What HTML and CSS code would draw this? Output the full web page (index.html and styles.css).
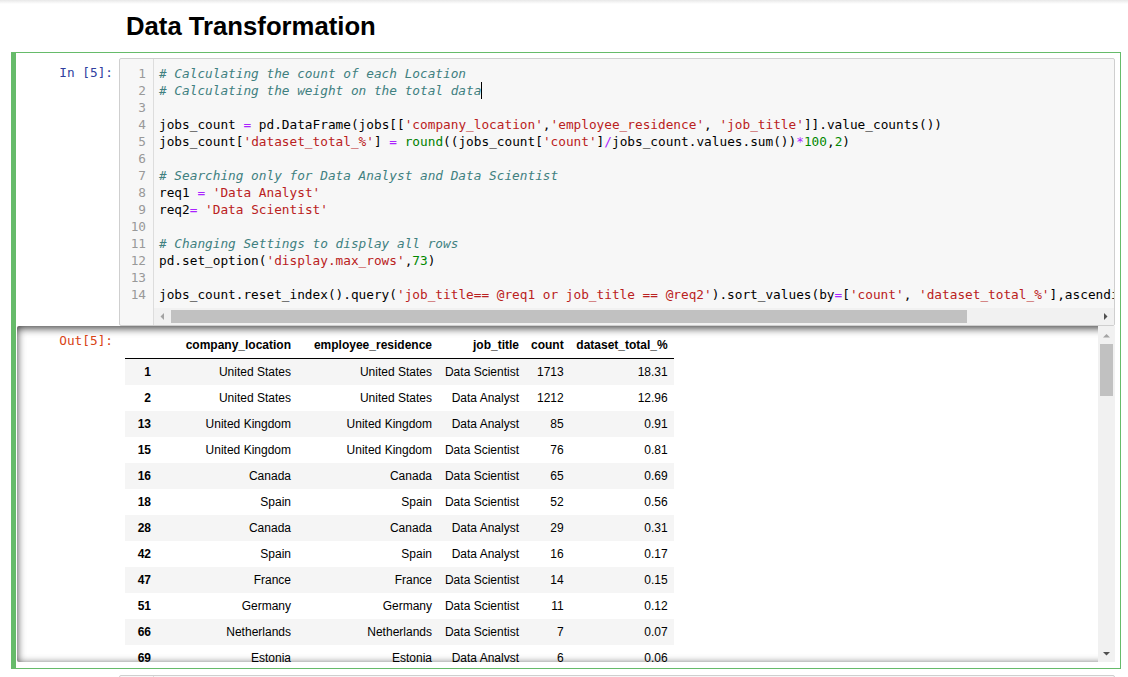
FILE: index.html
```html
<!DOCTYPE html>
<html>
<head>
<meta charset="utf-8">
<link rel="stylesheet" href="styles.css">
</head>
<body>
<div class="notebook">
  <div class="cell text-cell">
    <div class="prompt"></div>
    <div class="text-render"><h2>Data Transformation</h2></div>
  </div>

  <div class="cell selected">
    <div class="input">
      <div class="prompt in-prompt">In&nbsp;[5]:</div>
      <div class="input-area">
        <div class="gutter">
          <div class="line">1</div><div class="line">2</div><div class="line">3</div><div class="line">4</div><div class="line">5</div><div class="line">6</div><div class="line">7</div><div class="line">8</div><div class="line">9</div><div class="line">10</div><div class="line">11</div><div class="line">12</div><div class="line">13</div><div class="line">14</div>
        </div>
        <div class="main">
          <div class="code">
            <div class="line"><span class="cm"># Calculating the count of each Location</span></div>
            <div class="line"><span class="cm"># Calculating the weight on the total data</span><span class="cursor"></span></div>
            <div class="line"> </div>
            <div class="line">jobs_count <span class="op">=</span> pd.DataFrame(jobs[[<span class="st">'company_location'</span>,<span class="st">'employee_residence'</span>, <span class="st">'job_title'</span>]].value_counts())</div>
            <div class="line">jobs_count[<span class="st">'dataset_total_%'</span>] <span class="op">=</span> <span class="bi">round</span>((jobs_count[<span class="st">'count'</span>]<span class="op">/</span>jobs_count.values.sum())<span class="op">*</span><span class="nu">100</span>,<span class="nu">2</span>)</div>
            <div class="line"> </div>
            <div class="line"><span class="cm"># Searching only for Data Analyst and Data Scientist</span></div>
            <div class="line">req1 <span class="op">=</span> <span class="st">'Data Analyst'</span></div>
            <div class="line">req2<span class="op">=</span> <span class="st">'Data Scientist'</span></div>
            <div class="line"> </div>
            <div class="line"><span class="cm"># Changing Settings to display all rows</span></div>
            <div class="line">pd.set_option(<span class="st">'display.max_rows'</span>,<span class="nu">73</span>)</div>
            <div class="line"> </div>
            <div class="line">jobs_count.reset_index().query(<span class="st">'job_title== @req1 or job_title == @req2'</span>).sort_values(by<span class="op">=</span>[<span class="st">'count'</span>, <span class="st">'dataset_total_%'</span>],ascending<span class="op">=</span><span class="kw">False</span>)</div>
          </div>
          <div class="hscroll">
            <div class="sbtn"><svg width="17" height="17" viewBox="0 0 17 17"><polygon points="10,5 10,12 6.5,8.5" fill="#a3a3a3"/></svg></div>
            <div class="hthumb"></div>
            <div class="track"></div>
            <div class="sbtn"><svg width="17" height="17" viewBox="0 0 17 17"><polygon points="7,5 7,12 10.5,8.5" fill="#505050"/></svg></div>
          </div>
        </div>
      </div>
    </div>

    <div class="output-scroll">
      <div class="output-area">
        <div class="prompt out-prompt">Out[5]:</div>
        <div class="output-sub">
          <table class="df">
            <thead>
              <tr><th class="c0"></th><th class="c1">company_location</th><th class="c2">employee_residence</th><th class="c3">job_title</th><th class="c4">count</th><th class="c5">dataset_total_%</th></tr>
            </thead>
            <tbody>
              <tr><th>1</th><td>United States</td><td>United States</td><td>Data Scientist</td><td>1713</td><td>18.31</td></tr>
              <tr><th>2</th><td>United States</td><td>United States</td><td>Data Analyst</td><td>1212</td><td>12.96</td></tr>
              <tr><th>13</th><td>United Kingdom</td><td>United Kingdom</td><td>Data Analyst</td><td>85</td><td>0.91</td></tr>
              <tr><th>15</th><td>United Kingdom</td><td>United Kingdom</td><td>Data Scientist</td><td>76</td><td>0.81</td></tr>
              <tr><th>16</th><td>Canada</td><td>Canada</td><td>Data Scientist</td><td>65</td><td>0.69</td></tr>
              <tr><th>18</th><td>Spain</td><td>Spain</td><td>Data Scientist</td><td>52</td><td>0.56</td></tr>
              <tr><th>28</th><td>Canada</td><td>Canada</td><td>Data Analyst</td><td>29</td><td>0.31</td></tr>
              <tr><th>42</th><td>Spain</td><td>Spain</td><td>Data Analyst</td><td>16</td><td>0.17</td></tr>
              <tr><th>47</th><td>France</td><td>France</td><td>Data Scientist</td><td>14</td><td>0.15</td></tr>
              <tr><th>51</th><td>Germany</td><td>Germany</td><td>Data Scientist</td><td>11</td><td>0.12</td></tr>
              <tr><th>66</th><td>Netherlands</td><td>Netherlands</td><td>Data Scientist</td><td>7</td><td>0.07</td></tr>
              <tr><th>69</th><td>Estonia</td><td>Estonia</td><td>Data Analyst</td><td>6</td><td>0.06</td></tr>
            </tbody>
          </table>
        </div>
      </div>
      <div class="vscroll">
        <div class="sbtn"><svg width="17" height="17" viewBox="0 0 17 17"><polygon points="5,11.5 12,11.5 8.5,8" fill="#a3a3a3"/></svg></div>
        <div class="vthumb"></div>
        <div class="track"></div>
        <div class="sbtn"><svg width="17" height="17" viewBox="0 0 17 17"><polygon points="5,7 12,7 8.5,10.5" fill="#505050"/></svg></div>
      </div>
    </div>
  </div>

  <div class="cell">
    <div class="input">
      <div class="prompt in-prompt"></div>
      <div class="input-area next">
        <div class="gutter"></div>
        <div class="main"></div>
      </div>
    </div>
  </div>
</div>
</body>
</html>
```
FILE: styles.css
```css
* { box-sizing: border-box; }
html, body { margin: 0; padding: 0; }
body {
  width: 1128px;
  height: 677px;
  overflow: hidden;
  background: linear-gradient(#e8e8e8 0, #ffffff 4px);
  font-family: "Liberation Sans", Arial, sans-serif;
  color: #000;
}
.notebook {
  margin-left: 11px;
  width: 1110px;
}
.cell {
  border: 1px solid transparent;
  border-left-width: 5px;
  padding: 5px 5px 5px 1px;
}
.cell.selected {
  border-color: #66bb6a;
  padding-bottom: 6px;
}
.text-cell {
  display: flex;
  height: 52px;
  padding-top: 11px;
  border-top: 0;
  border-bottom: 0;
}
.text-render {
  padding-left: 7px;
}
.text-render h2 {
  margin: 0;
  font-size: 25.7px;
  line-height: 30px;
  font-weight: bold;
}
.prompt {
  width: 102px;
  flex: none;
  padding: 6px 6px 0 0;
  text-align: right;
  font-family: "DejaVu Sans Mono", "Liberation Mono", monospace;
  font-size: 12.75px;
  line-height: 17px;
}
.in-prompt { color: #303F9F; }
.out-prompt { color: #D84315; }
.input { display: flex; }
.input-area {
  flex: 1;
  min-width: 0;
  display: flex;
  height: 268px;
  overflow: hidden;
  background: #f7f7f7;
  border: 1px solid #cfcfcf;
  border-radius: 2px;
  font-family: "DejaVu Sans Mono", "Liberation Mono", monospace;
  font-size: 12.75px;
}
.input-area.next { height: 40px; }
.gutter {
  width: 34px;
  flex: none;
  border-right: 1px solid #dddddd;
  padding: 6px 7px 0 0;
  text-align: right;
  color: #999999;
}
.main {
  flex: 1;
  min-width: 0;
  display: flex;
  flex-direction: column;
}
.code {
  flex: 1;
  padding: 6px 0 0 5px;
  overflow: hidden;
  color: #000;
}
.line {
  height: 17px;
  line-height: 17px;
  white-space: pre;
}
.cm { color: #408080; font-style: italic; }
.st { color: #BA2121; }
.op { color: #AA22FF; }
.nu { color: #008800; }
.bi { color: #008000; }
.kw { color: #008000; font-weight: bold; }
.cursor {
  display: inline-block;
  width: 0;
  height: 17px;
  border-left: 1px solid #000;
  vertical-align: top;
}
.hscroll {
  height: 17px;
  flex: none;
  display: flex;
  background: #f1f1f1;
}
.sbtn {
  width: 17px;
  height: 17px;
  flex: none;
}
.sbtn svg { display: block; }
.hthumb {
  width: 796px;
  flex: none;
  margin: 2px 0;
  background: #c1c1c1;
}
.track { flex: 1; }
.output-scroll {
  display: flex;
  height: 336px;
  border-radius: 2px;
  box-shadow: inset 0 2px 8px rgba(0, 0, 0, 0.8);
}
.output-area {
  flex: 1;
  min-width: 0;
  display: flex;
  overflow: hidden;
}
.output-sub {
  flex: 1;
  min-width: 0;
  padding: 6px 6px;
  overflow: hidden;
}
.vscroll {
  width: 17px;
  flex: none;
  display: flex;
  flex-direction: column;
  background: #f1f1f1;
}
.vthumb {
  height: 52px;
  flex: none;
  margin: 1px 2px 0;
  background: #c1c1c1;
}
.df {
  border-collapse: collapse;
  border: none;
  font-family: "Liberation Sans", Arial, sans-serif;
  font-size: 12px;
  line-height: 14px;
  color: #000;
}
.df th, .df td {
  padding: 6px;
  text-align: right;
  vertical-align: middle;
  white-space: nowrap;
}
.df th { font-weight: bold; }
.df thead th {
  border-bottom: 1px solid #000;
  vertical-align: bottom;
}
.df tbody tr:nth-child(odd) { background: #f5f5f5; }
.c0 { width: 32px; }
.c1 { width: 140px; }
.c2 { width: 141px; }
.c3 { width: 87px; }
.c4 { width: 44px; }
.c5 { width: 104px; }
```
